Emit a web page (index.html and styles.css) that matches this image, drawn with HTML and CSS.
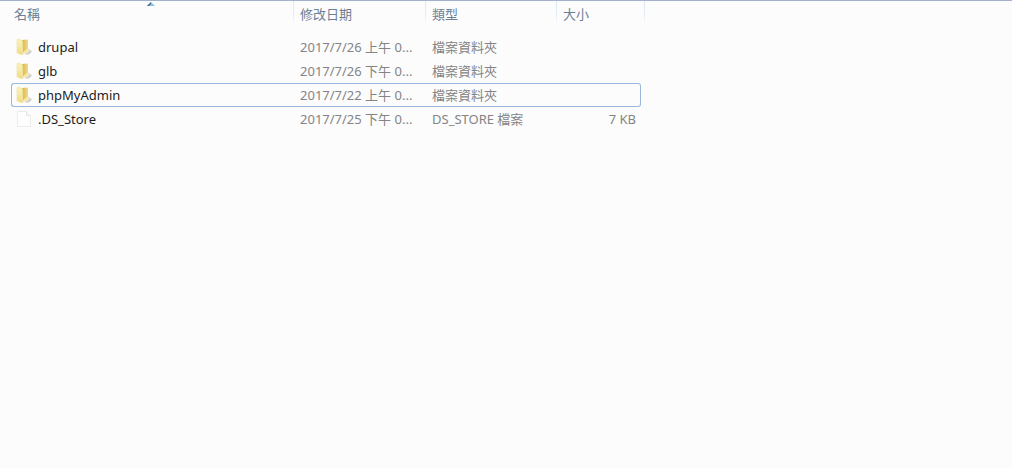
FILE: index.html
```html
<!DOCTYPE html>
<html lang="zh-Hant">
<head>
<meta charset="utf-8">
<title>檔案清單</title>
<link rel="stylesheet" href="styles.css">
</head>
<body>
<svg class="defs" aria-hidden="true">
  <defs>
    <linearGradient id="front" x1="0" x2="0" y1="0" y2="1">
      <stop offset="0" stop-color="#fbf2bc"/>
      <stop offset="1" stop-color="#f3dc80"/>
    </linearGradient>
    <linearGradient id="back" x1="0" x2="1">
      <stop offset="0" stop-color="#d6b84c"/>
      <stop offset="1" stop-color="#f0dc84"/>
    </linearGradient>
    <symbol id="folder" viewBox="0 0 16 18">
      <path d="M10 14l3-3 3 2.500-3 3H9z" fill="#cdd0d6"/>
      <path d="M6 2l5.500-.5.5 1V12L7 16z" fill="url(#back)"/>
      <path d="M7 14l4-3 3 1.500-3 2.500-5 1.500z" fill="#f5e8a8"/>
      <path d="M1 1.500L3 1l3.500 2v13.500H5L1 15z" fill="url(#front)" stroke="#eedf98" stroke-width=".5"/>
    </symbol>
    <symbol id="file" viewBox="0 0 16 18">
      <path d="M1.500 1.500h9l4 4v11h-13z" fill="#fefefe" stroke="#ececec"/>
      <path d="M10.500 1.500v4h4" fill="#f8f8f8" stroke="#e6e6e6"/>
    </symbol>
  </defs>
</svg>
<main class="pane">
  <table class="files">
    <colgroup>
      <col class="edge"><col class="name"><col class="date"><col class="type"><col class="size"><col class="edge">
    </colgroup>
    <thead>
      <tr>
        <th colspan="2" class="first" aria-sort="ascending"><button class="sort">名稱</button><svg class="arrow" viewBox="0 0 8 5" aria-hidden="true"><path d="M0 5l4-4 4 4z" fill="#8fc3df"/><path d="M0 5l4-4v2L2 5z" fill="#40688c"/></svg></th>
        <th><button class="sort">修改日期</button></th>
        <th><button class="sort">類型</button></th>
        <th colspan="2"><button class="sort">大小</button></th>
      </tr>
    </thead>
    <tbody>
      <tr><td class="gap"></td><td class="title"><div class="label"><svg class="icon" aria-hidden="true"><use href="#folder"/></svg>drupal</div></td><td>2017/7/26 上午 0...</td><td>檔案資料夾</td><td></td><td class="gap"></td></tr>
      <tr><td class="gap"></td><td class="title"><div class="label"><svg class="icon" aria-hidden="true"><use href="#folder"/></svg>glb</div></td><td>2017/7/26 下午 0...</td><td>檔案資料夾</td><td></td><td class="gap"></td></tr>
      <tr class="focused"><td class="gap"></td><td class="title"><div class="label"><svg class="icon" aria-hidden="true"><use href="#folder"/></svg>phpMyAdmin</div></td><td>2017/7/22 上午 0...</td><td>檔案資料夾</td><td class="amount"></td><td class="gap"></td></tr>
      <tr><td class="gap"></td><td class="title"><div class="label"><svg class="icon" aria-hidden="true"><use href="#file"/></svg>.DS_Store</div></td><td>2017/7/25 下午 0...</td><td>DS_STORE 檔案</td><td class="amount">7 KB</td><td class="gap"></td></tr>
    </tbody>
  </table>
</main>
</body>
</html>
```
FILE: styles.css
```css
* {
  box-sizing: border-box;
}

body {
  margin: 0;
  background: #fff;
  font: 13px/20px "Noto Sans", "Noto Sans CJK TC", sans-serif;
  color: #848484;
}

.defs {
  position: absolute;
  width: 0;
  height: 0;
}

.pane {
  min-height: 100vh;
  margin-right: 12px;
  padding-left: 7px;
  border-top: 1px solid #a3b1cc;
  background: #fcfcfc;
}

.files {
  width: 638px;
  table-layout: fixed;
  border-collapse: separate;
  border-spacing: 0;
}

.edge { width: 4px; }
.name { width: 283px; }
.date { width: 132px; }
.type { width: 131px; }
.size { width: 84px; }

th {
  position: relative;
  height: 34px;
  padding: 3px 6px 0;
  text-align: left;
  vertical-align: top;
  background: linear-gradient(#dfe8f5, #e6edf8 60%, #fcfcfc) right top / 1px 24px no-repeat;
}

.first {
  padding-left: 7px;
}

.sort {
  padding: 0;
  border: 0;
  background: none;
  font: inherit;
  font-weight: 400;
  color: #6d7f95;
}

.arrow {
  position: absolute;
  top: 0;
  left: 50%;
  width: 8px;
  height: 5px;
  margin-left: -4px;
}

td {
  height: 24px;
  padding: 0 6px 1px;
  border: solid transparent;
  border-width: 1px 0;
  white-space: nowrap;
}

td.gap {
  padding: 0;
  border: 0;
}

.title {
  padding-left: 4px;
  border-left-width: 1px;
  color: #1c1c1c;
}

.label {
  display: flex;
  align-items: center;
  gap: 6px;
}

.icon {
  width: 16px;
  height: 18px;
}

.amount {
  padding-right: 4px;
  border-right-width: 1px;
  text-align: right;
}

.focused td {
  border-color: #98b8dc;
}

.focused .title {
  border-radius: 3px 0 0 3px;
}

.focused .amount {
  border-radius: 0 3px 3px 0;
}
```
